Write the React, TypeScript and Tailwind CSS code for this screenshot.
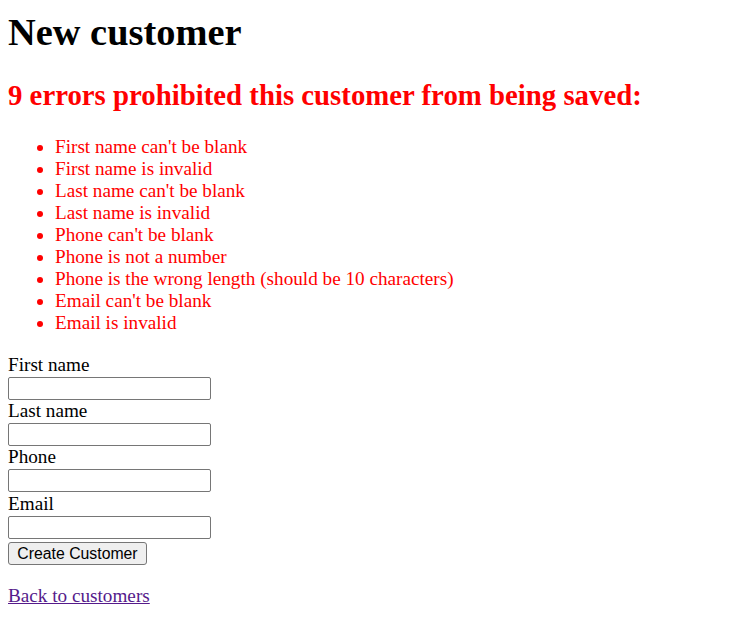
const errors = [
  "First name can't be blank",
  "First name is invalid",
  "Last name can't be blank",
  "Last name is invalid",
  "Phone can't be blank",
  "Phone is not a number",
  "Phone is the wrong length (should be 10 characters)",
  "Email can't be blank",
  "Email is invalid",
];

const fields = ["First name", "Last name", "Phone", "Email"];

const App = () => {
  return (
    <div className="min-h-screen bg-white px-2 pt-2 text-[19.2px] text-black font-['Liberation_Serif',_'Times_New_Roman',_serif]">
      <h1 className="mt-[2px] text-[38.4px] leading-[44px] font-bold">New customer</h1>

      <form onSubmit={(e) => e.preventDefault()}>
        <div className="text-[#ff0000]">
          <h2 className="mt-[25px] text-[28.8px] leading-[33px] font-bold">
            9 errors prohibited this customer from being saved:
          </h2>
          <ul className="mt-6 mb-5 list-disc pl-[47px] leading-[22px]">
            {errors.map((err) => (
              <li key={err}>{err}</li>
            ))}
          </ul>
        </div>

        {fields.map((name) => (
          <div key={name} className={name === "Email" ? "mt-px" : ""}>
            <label className="block leading-[22px]">{name}</label>
            <div className="h-6 pt-px">
              <input
                type="text"
                className="block h-[23px] w-[203px] rounded-[2px] border border-[#767676] bg-white px-0.5 text-[15.8px] font-['Liberation_Sans',_Arial,_sans-serif]"
              />
            </div>
          </div>
        ))}

        <div className="h-[23px]">
          <button
            type="submit"
            className="h-[23px] w-[139px] whitespace-nowrap rounded-[3px] border border-[#767676] bg-[#efefef] px-0 text-center text-[15.8px] leading-[21px] text-black font-['Liberation_Sans',_Arial,_sans-serif]"
          >
            Create Customer
          </button>
        </div>
      </form>

      <div className="h-[23px]" />
      <div className="leading-[22px]">
        <a href="#" className="text-[#551a8b] underline">
          Back to customers
        </a>
      </div>
    </div>
  );
};

export default App;
